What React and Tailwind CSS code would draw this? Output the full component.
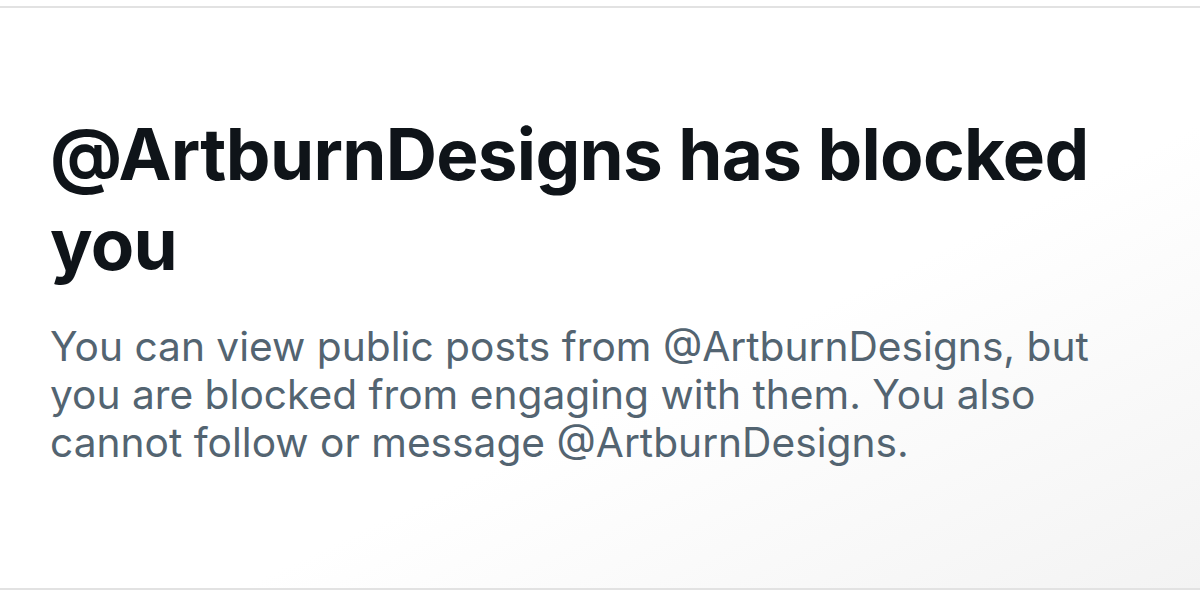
export default function App() {
  return (
    <div className="w-[1200px] h-[591px] bg-white pt-[6px] font-['Inter',sans-serif]">
      <div className="h-[584px] border-y-2 border-[#e2e2e2] bg-gradient-to-br from-white from-60% to-[#f3f3f3] pl-[50px] pt-[101px]">
        <h1 className="w-[1080px] text-[71px] leading-[90px] font-bold text-[#0f1419] tracking-[-0.7px]">
          @ArtburnDesigns has blocked you
        </h1>
        <p className="w-[1080px] mt-[34px] text-[40.7px] leading-[48px] text-[#536471]">
          You can view public posts from @ArtburnDesigns, but you are blocked from engaging with them. You also cannot follow or message @ArtburnDesigns.
        </p>
      </div>
    </div>
  )
}
